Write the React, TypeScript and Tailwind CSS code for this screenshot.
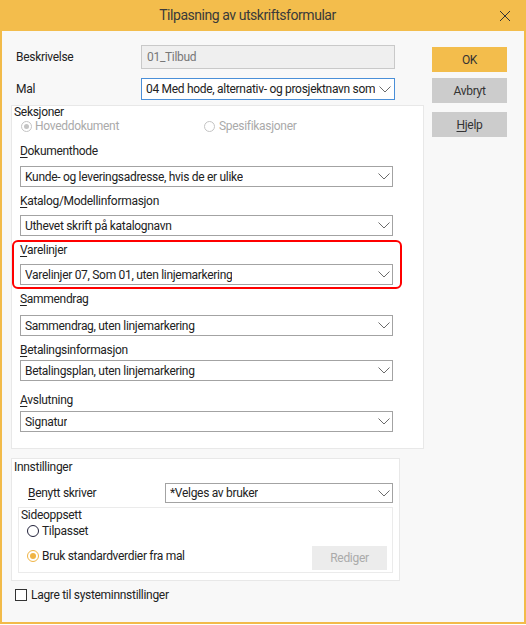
import type { ReactNode } from "react";

const font = { fontFamily: 'Roboto, "Noto Sans", sans-serif' };

function Chevron() {
  return (
    <svg width="12" height="7" viewBox="0 0 12 7" className="shrink-0">
      <polyline points="0.5,0.5 6,6 11.5,0.5" fill="none" stroke="#6b6b6b" strokeWidth="1" />
    </svg>
  );
}

function Select({ value, className = "" }: { value: string; className?: string }) {
  return (
    <div
      className={`flex h-[21px] items-center justify-between border border-[#a3a3a3] bg-white pl-[4px] pr-[2px] text-[12px] text-[#222] ${className}`}
    >
      <span className="overflow-hidden whitespace-nowrap">{value}</span>
      <Chevron />
    </div>
  );
}

function FieldLabel({ first, rest, className = "" }: { first: string; rest: string; className?: string }) {
  return (
    <div className={`h-[14px] text-[12px] leading-[14px] text-[#222] ${className}`}>
      <u className="underline-offset-2">{first}</u>
      {rest}
    </div>
  );
}

function Radio({ state }: { state: "disabled" | "off" | "on" }) {
  if (state === "on") {
    return (
      <span className="flex h-[12px] w-[12px] items-center justify-center rounded-full border border-[#f0b444]">
        <span className="h-[6px] w-[6px] rounded-full bg-[#f0b444]" />
      </span>
    );
  }
  if (state === "disabled") {
    return (
      <span className="flex h-[11px] w-[11px] items-center justify-center rounded-full border border-[#c4c4c4]">
        <span className="h-[5px] w-[5px] rounded-full bg-[#c4c4c4]" />
      </span>
    );
  }
  return <span className="h-[12px] w-[12px] rounded-full border border-[#22223a]" />;
}

function Button({ children, className }: { children: ReactNode; className: string }) {
  return (
    <div className={`flex h-[25px] w-[75px] items-center justify-center text-[12px] text-[#333] ${className}`}>
      {children}
    </div>
  );
}

export default function App() {
  return (
    <div
      style={font}
      className="flex h-[624px] w-[526px] flex-col border-x-2 border-b-2 border-[#f2bb4a] bg-[#f8f8f8] text-[12px] tracking-[-0.3px] text-[#222]"
    >
      <div className="-mx-[2px] flex h-[31px] items-center bg-[#f3bd4c]">
        <div className="flex-1 pr-[4px] text-center text-[14px] tracking-[-0.45px] text-[#3a3a3a]">
          Tilpasning av utskriftsformular
        </div>
        <svg width="12" height="12" viewBox="0 0 12 12" className="mr-[15px]">
          <path d="M1 1 L11 11 M11 1 L1 11" stroke="#333" strokeWidth="1" />
        </svg>
      </div>

      <div className="flex flex-1">
        <div className="flex w-[422px] flex-col pl-[9px] pt-[14px]">
          <div className="flex h-[24px] items-center">
            <span className="ml-[5px] w-[125px]">Beskrivelse</span>
            <div className="flex h-[24px] w-[254px] items-center border border-[#c9c9c9] bg-[#efefef] pl-[5px] text-[#777]">
              01_Tilbud
            </div>
          </div>
          <div className="mt-[9px] flex h-[22px] items-center">
            <span className="ml-[5px] w-[125px]">Mal</span>
            <div className="flex h-[22px] w-[254px] items-center justify-between border border-[#4a8fd8] bg-white pl-[4px] pr-[3px]">
              <span className="overflow-hidden whitespace-nowrap">04 Med hode, alternativ- og prosjektnavn som</span>
              <Chevron />
            </div>
          </div>

          <div className="mt-[5px] flex w-[413px] flex-col border border-[#e8e8e8] bg-white pb-[16px]">
            <div className="h-[14px] pl-[2px] leading-[13px]">Seksjoner</div>
            <div className="flex h-[13px] items-center text-[#aaa]">
              <div className="flex w-[192px] items-center gap-[3px] pl-[9px]">
                <Radio state="disabled" />
                <span className="leading-[13px]">Hoveddokument</span>
              </div>
              <div className="flex items-center gap-[4px]">
                <span className="h-[11px] w-[11px] rounded-full border border-[#c4c4c4]" />
                <span className="leading-[13px]">Spesifikasjoner</span>
              </div>
            </div>

            <div className="flex flex-col pl-[8px]">
              <FieldLabel first="D" rest="okumenthode" className="mt-[11px]" />
              <Select value="Kunde- og leveringsadresse, hvis de er ulike" className="mt-[8px] w-[373px]" />
              <FieldLabel first="K" rest="atalog/Modellinformasjon" className="mt-[7px]" />
              <Select value="Uthevet skrift på katalognavn" className="mt-[7px] w-[373px]" />
            </div>

            <div className="mt-[4px] flex w-[390px] flex-col rounded-[6px] border-2 border-[#f00] pb-[2px] pl-[6px] pt-[1px]">
              <FieldLabel first="V" rest="arelinjer" />
              <Select value="Varelinjer 07, Som 01, uten linjemarkering" className="mt-[7px] w-[373px]" />
            </div>

            <div className="flex flex-col pl-[8px]">
              <FieldLabel first="S" rest="ammendrag" className="mt-[3px]" />
              <Select value="Sammendrag, uten linjemarkering" className="mt-[9px] w-[373px]" />
              <FieldLabel first="B" rest="etalingsinformasjon" className="mt-[7px]" />
              <Select value="Betalingsplan, uten linjemarkering" className="mt-[3px] w-[373px]" />
              <FieldLabel first="A" rest="vslutning" className="mt-[12px]" />
              <Select value="Signatur" className="mt-[4px] w-[373px]" />
            </div>
          </div>

          <div className="mt-[9px] flex w-[389px] flex-col border border-[#e8e8e8] bg-white pb-[7px]">
            <div className="mt-[1px] h-[14px] pl-[2px] leading-[14px]">Innstillinger</div>
            <div className="mt-[9px] flex h-[20px] items-center">
              <span className="w-[153px] pl-[16px]">
                <u className="underline-offset-2">B</u>enytt skriver
              </span>
              <Select value="*Velges av bruker" className="!h-[20px] w-[228px]" />
            </div>
            <div className="ml-[6px] mt-[4px] flex w-[375px] flex-col border border-[#ebebeb] pb-[2px]">
              <div className="mt-[1px] h-[13px] pl-[2px] leading-[13px]">Sideoppsett</div>
              <div className="mt-[2px] flex h-[14px] items-center gap-[3px] pl-[8px]">
                <Radio state="off" />
                <span>Tilpasset</span>
              </div>
              <div className="mt-[8px] flex items-start justify-between pr-[5px]">
                <div className="mt-[3px] flex h-[14px] items-center gap-[3px] pl-[8px]">
                  <Radio state="on" />
                  <span>Bruk standardverdier fra mal</span>
                </div>
                <div className="flex h-[24px] w-[75px] items-center justify-center bg-[#ececec] text-[#aaa]">
                  Rediger
                </div>
              </div>
            </div>
          </div>

          <div className="mt-[8px] flex h-[12px] items-center gap-[4px] pl-[4px]">
            <span className="h-[12px] w-[12px] border border-[#333] bg-white" />
            <span>Lagre til systeminnstillinger</span>
          </div>
        </div>

        <div className="ml-[8px] flex flex-col pt-[16px]">
          <Button className="bg-[#f3bd4c]">OK</Button>
          <Button className="mt-[6px] bg-[#cccccc]">Avbryt</Button>
          <Button className="mt-[9px] bg-[#cccccc]">
            <span>
              <u className="underline-offset-2">H</u>jelp
            </span>
          </Button>
        </div>
      </div>
    </div>
  );
}
